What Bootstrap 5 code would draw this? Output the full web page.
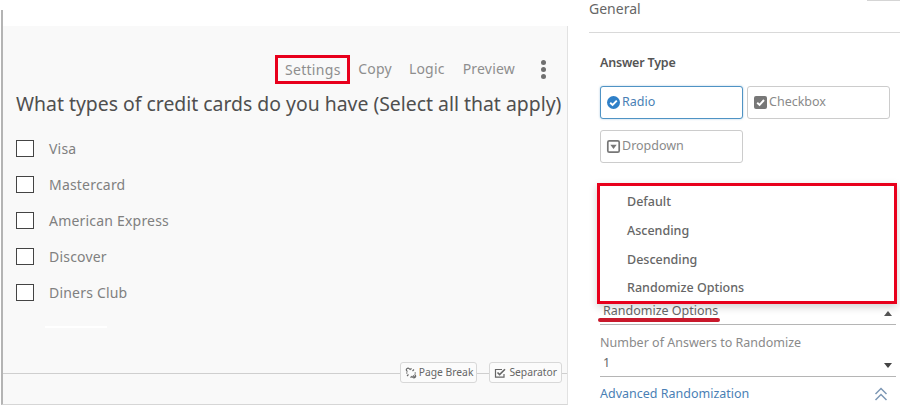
<!doctype html>
<html lang="en">
<head>
<meta charset="utf-8">
<title>Survey editor</title>
<link href="https://cdn.jsdelivr.net/npm/bootstrap@5.3.0/dist/css/bootstrap.min.css" rel="stylesheet">
<style>
html,body{height:409px;overflow:hidden;background:#fff;}
body{font-family:"Noto Sans","Open Sans",sans-serif;color:#666;}
.canvas-col{width:568px;height:409px;flex:none;padding:10px 0 0 1px;}
.top-strip{height:16px;border-left:2px solid #b4b4b4;}
.canvas-card{height:379px;background:#f9f9f9;border-left:2px solid #b4b4b4;border-right:1px solid #e2e2e2;border-bottom:1px solid #d6d6d6;position:relative;padding-top:28px;}
.tool-row{height:30px;padding-right:18px;align-items:center;}
.tool-link{font-size:14px;color:#8e8e8e;margin-right:18px;line-height:20px;letter-spacing:.2px;}
.tool-link.tight{margin-right:17px;}
.tool-link.wide{margin-right:24px;}
.tool-mark{border:3px solid #e8001c;height:29px;width:75px;margin-right:8px;display:flex;align-items:center;justify-content:center;font-size:14px;letter-spacing:.3px;color:#8e8e8e;}
.dots{width:5px;display:flex;flex-direction:column;gap:2px;margin-left:2px;margin-right:3px;}
.dots i{display:block;width:5px;height:5px;border-radius:50%;background:#707070;}
.q-title{font-size:19.4px;color:#4f4f4f;margin:6px 0 0 13px;line-height:28px;white-space:nowrap;}
.opt-list{margin:12px 0 0 13px;}
.opt-row{height:36px;display:flex;align-items:center;}
.opt-box{width:18px;height:17px;border:1px solid #444;background:#fff;margin-right:15px;flex:none;}
.opt-text{font-size:14px;color:#808080;letter-spacing:.2px;}
.white-dash{width:62px;height:2px;background:#fff;margin:16px 0 0 42px;}
.bar-row{position:absolute;left:0;right:0;bottom:21px;height:21px;display:flex;justify-content:flex-end;align-items:center;gap:12px;padding-right:5px;}
.bar-row::before{content:"";position:absolute;left:0;right:0;top:11px;border-top:1px solid #cfcfcf;}
.mini-btn{position:relative;height:21px;background:#fbfbfb;border:1px solid #d8d8d8;border-radius:3px;font-size:10.3px;color:#666;display:flex;align-items:center;gap:2px;padding:0 3px 0 4px;white-space:nowrap;}
.mini-btn.sep{gap:3px;padding:0 4px;}
.side-col{width:332px;flex:none;position:relative;}
.side-col::after{content:"";position:absolute;right:0;top:0;width:33px;border-top:1px solid #d5d5d5;}
.side-title{font-size:14px;color:#666;padding:0 0 0 21px;line-height:18px;}
.side-rule{border-top:1px solid #d9d9d9;margin:14px 0 0 21px;}
.side-body{padding:0 4px 0 32px;}
.type-label{font-size:12.5px;font-weight:600;color:#555;margin-top:20px;line-height:20px;letter-spacing:-.2px;}
.type-grid{display:grid;grid-template-columns:143px 143px;gap:11px 4px;margin-top:13px;}
.type-btn{height:33px;border:1px solid #ccc;border-radius:3px;background:#fff;color:#8a8a8a;font-size:12.5px;display:flex;align-items:center;gap:1px;padding:0 0 0 5px;}
.type-btn.on{border-color:#4f93c4;color:#4a7fb5;box-shadow:0 0 2px rgba(70,140,190,.5);}
.menu-box{position:absolute;left:29px;top:183px;width:300px;height:121px;border:3px solid #e8001c;background:#fff;box-shadow:0 3px 8px rgba(0,0,0,.18);padding:3px 0 0 27px;z-index:2;}
.menu-item{font-size:12.5px;font-weight:500;color:#666;height:28.800px;line-height:26px;}
.sel-wrap{margin-top:138px;}
.sel-row{display:flex;justify-content:space-between;align-items:flex-start;border-bottom:1px solid #b5b5b5;height:24px;font-size:12.5px;line-height:20px;color:#666;padding:0 4px 0 3px;position:relative;}
.caret-up{width:0;height:0;border:4px solid transparent;border-bottom:5px solid #555;border-top:0;margin-top:10px;}
.caret-down{width:0;height:0;border:4px solid transparent;border-top:5px solid #444;border-bottom:0;margin-top:10px;}
.red-under{position:absolute;left:-2px;bottom:2px;width:122px;height:4px;background:#c9182b;border-radius:2px;}
.num-label{font-size:12.5px;color:#8a8a8a;margin-top:9px;line-height:18px;}
.sel-num{height:25px;padding-top:1px;}
.adv-row{display:flex;justify-content:space-between;align-items:center;margin-top:7px;color:#4a7fb5;font-size:12.5px;line-height:20px;padding-right:8px;}
</style>
</head>
<body class="d-flex m-0">
<div class="canvas-col">
  <div class="top-strip"></div>
  <div class="canvas-card">
    <div class="d-flex justify-content-end tool-row">
      <span class="tool-mark">Settings</span>
      <span class="tool-link tight">Copy</span>
      <span class="tool-link">Logic</span>
      <span class="tool-link wide">Preview</span>
      <span class="dots"><i></i><i></i><i></i></span>
    </div>
    <div class="q-title">What types of credit cards do you have (Select all that apply)</div>
    <div class="opt-list">
      <div class="opt-row"><span class="opt-box"></span><span class="opt-text">Visa</span></div>
      <div class="opt-row"><span class="opt-box"></span><span class="opt-text">Mastercard</span></div>
      <div class="opt-row"><span class="opt-box"></span><span class="opt-text">American Express</span></div>
      <div class="opt-row"><span class="opt-box"></span><span class="opt-text">Discover</span></div>
      <div class="opt-row"><span class="opt-box"></span><span class="opt-text">Diners Club</span></div>
    </div>
    <div class="white-dash"></div>
    <div class="bar-row">
      <span class="mini-btn"><svg width="12" height="12" viewBox="0 0 12 12" fill="none" stroke="#666" stroke-width="1.1"><path d="M2.500 4.500 1.800 4A1.700 1.700 0 0 1 4.200 1.600L5.500 3M6.500 9 7.800 10.400A1.700 1.700 0 0 0 10.200 8L9.500 7.500M3.500 7.500 2 9M9 2.500 7.500 4M8 8.500 10 10.500M1 6h1.500M6 1v1.500M9.500 6H11M6 9.500V11" /></svg>Page Break</span>
      <span class="mini-btn sep"><svg width="12" height="12" viewBox="0 0 12 12" fill="none" stroke="#666" stroke-width="1.2"><path d="M10 7v3.200H1.500V2.500H8"/><path d="M3.500 5.500 5.600 7.600 11 2.200" stroke-width="1.600"/></svg>Separator</span>
    </div>
  </div>
</div>
<div class="side-col">
  <div class="side-title">General</div>
  <div class="side-rule"></div>
  <div class="side-body">
    <div class="type-label">Answer Type</div>
    <div class="type-grid">
      <div class="type-btn on"><svg width="15" height="15" viewBox="0 0 15 15"><circle cx="7.500" cy="7.500" r="6.500" fill="#2f80c8"/><path d="M4.200 7.700 6.600 10 10.800 5.600" fill="none" stroke="#fff" stroke-width="1.900"/></svg>Radio</div>
      <div class="type-btn"><svg width="15" height="15" viewBox="0 0 15 15"><rect x="1" y="1" width="13" height="13" rx="2" fill="#777"/><path d="M4.200 7.700 6.600 10 11 5" fill="none" stroke="#fff" stroke-width="1.900"/></svg>Checkbox</div>
      <div class="type-btn"><svg width="15" height="15" viewBox="0 0 15 15"><rect x="1.800" y="1.800" width="11.400" height="11.400" rx="1.500" fill="#fff" stroke="#777" stroke-width="1.700"/><path d="M4.300 5.800h6.400L7.500 10z" fill="#777"/></svg>Dropdown</div>
    </div>
    <div class="sel-wrap">
      <div class="sel-row"><span>Randomize Options</span><span class="caret-up"></span><span class="red-under"></span></div>
      <div class="num-label">Number of Answers to Randomize</div>
      <div class="sel-row sel-num"><span>1</span><span class="caret-down"></span></div>
      <div class="adv-row"><span>Advanced Randomization</span><svg width="14" height="14" viewBox="0 0 14 14" fill="none" stroke="#7d98b5" stroke-width="1.500"><path d="M1.500 7 7 1.500 12.500 7M1.500 13 7 7.500 12.500 13"/></svg></div>
    </div>
  </div>
  <div class="menu-box">
    <div class="menu-item">Default</div>
    <div class="menu-item">Ascending</div>
    <div class="menu-item">Descending</div>
    <div class="menu-item">Randomize Options</div>
  </div>
</div>
</body>
</html>
